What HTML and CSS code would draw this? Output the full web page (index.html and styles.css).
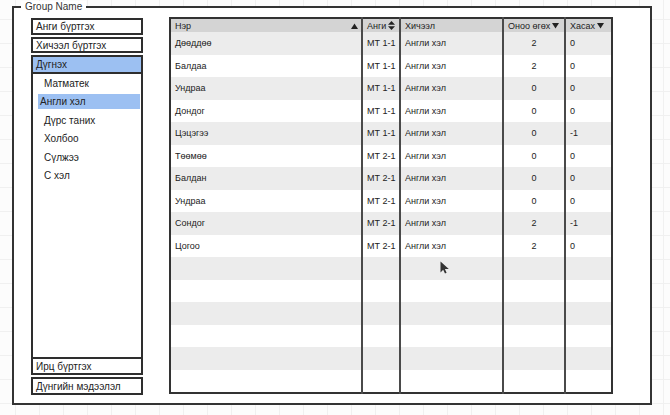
FILE: index.html
```html
<!DOCTYPE html>
<html lang="mn">
<head>
<meta charset="utf-8">
<title>Дүгнэх</title>
<link rel="stylesheet" href="styles.css">
</head>
<body>
<div class="page">
  <div class="group">
    <div class="legend">Group Name</div>
    <div class="side">
      <div class="btn btn-1">Анги бүртгэх</div>
      <div class="btn btn-2">Хичээл бүртгэх</div>
      <div class="btn btn-3 active">Дүгнэх</div>
      <ul class="tree">
        <li class="item">Матматек</li>
        <li class="item selected">Англи хэл</li>
        <li class="item">Дүрс таних</li>
        <li class="item">Холбоо</li>
        <li class="item">Сүлжээ</li>
        <li class="item">С хэл</li>
      </ul>
      <div class="btn btn-4">Ирц бүртгэх</div>
      <div class="btn btn-5">Дүнгийн мэдээлэл</div>
    </div>
    <table class="grid">
      <colgroup>
        <col class="c-name"><col class="c-class"><col class="c-subj"><col class="c-score"><col class="c-minus">
      </colgroup>
      <thead>
        <tr>
          <th><div class="hd hd-spread"><span>Нэр</span><svg class="ico" width="7" height="6" viewBox="0 0 7 6"><polygon points="0,6 3.5,0.5 7,6" fill="#222"/></svg></div></th>
          <th><div class="hd"><span>Анги</span><svg class="ico" width="7" height="9" viewBox="0 0 7 9"><polygon points="0,3.8 3.5,0 7,3.8" fill="#222"/><polygon points="0,5.2 3.5,9 7,5.2" fill="#222"/></svg></div></th>
          <th><div class="hd"><span>Хичээл</span></div></th>
          <th><div class="hd"><span>Оноо өгөх</span><svg class="ico" width="7" height="6" viewBox="0 0 7 6"><polygon points="0,0 7,0 3.5,5.5" fill="#222"/></svg></div></th>
          <th class="last"><div class="hd"><span>Хасах</span><svg class="ico" width="7" height="6" viewBox="0 0 7 6"><polygon points="0,0 7,0 3.5,5.5" fill="#222"/></svg></div></th>
        </tr>
      </thead>
      <tbody>
        <tr><td>Дөөддөө</td><td>МТ 1-1</td><td>Англи хэл</td><td class="num">2</td><td class="last">0</td></tr>
        <tr><td>Балдаа</td><td>МТ 1-1</td><td>Англи хэл</td><td class="num">2</td><td class="last">0</td></tr>
        <tr><td>Ундраа</td><td>МТ 1-1</td><td>Англи хэл</td><td class="num">0</td><td class="last">0</td></tr>
        <tr><td>Дондог</td><td>МТ 1-1</td><td>Англи хэл</td><td class="num">0</td><td class="last">0</td></tr>
        <tr><td>Цэцэгээ</td><td>МТ 1-1</td><td>Англи хэл</td><td class="num">0</td><td class="last">-1</td></tr>
        <tr><td>Төөмөө</td><td>МТ 2-1</td><td>Англи хэл</td><td class="num">0</td><td class="last">0</td></tr>
        <tr><td>Балдан</td><td>МТ 2-1</td><td>Англи хэл</td><td class="num">0</td><td class="last">0</td></tr>
        <tr><td>Ундраа</td><td>МТ 2-1</td><td>Англи хэл</td><td class="num">0</td><td class="last">0</td></tr>
        <tr><td>Сондог</td><td>МТ 2-1</td><td>Англи хэл</td><td class="num">2</td><td class="last">-1</td></tr>
        <tr><td>Цогоо</td><td>МТ 2-1</td><td>Англи хэл</td><td class="num">2</td><td class="last">0</td></tr>
        <tr><td></td><td></td><td></td><td></td><td class="last"></td></tr>
        <tr><td></td><td></td><td></td><td></td><td class="last"></td></tr>
        <tr><td></td><td></td><td></td><td></td><td class="last"></td></tr>
        <tr><td></td><td></td><td></td><td></td><td class="last"></td></tr>
        <tr><td></td><td></td><td></td><td></td><td class="last"></td></tr>
        <tr><td></td><td></td><td></td><td></td><td class="last"></td></tr>
      </tbody>
    </table>
  </div>
  <svg class="cursor" width="10" height="13" viewBox="0 0 10 13"><path d="M0.5 0.5 L0.5 11.5 L3.2 8.8 L5 12.5 L6.6 11.8 L4.9 8.1 L8.8 8.1 Z" fill="#333"/></svg>
</div>
</body>
</html>
```
FILE: styles.css
```css
html, body {
  margin: 0;
  height: 100%;
}

body {
  font-family: "Liberation Sans", Arial, sans-serif;
  font-size: 10px;
  color: #222;
  background-color: #fcfcfc;
  background-image:
    linear-gradient(to right, #f0f0f0 1px, transparent 1px),
    linear-gradient(to bottom, #f0f0f0 1px, transparent 1px);
  background-size: 24px 24px;
  background-position: 15px 19px;
}

.page {
  position: relative;
  height: 415px;
  box-sizing: border-box;
  padding: 6px 18px 0 12px;
}

.group {
  position: relative;
  height: 399px;
  box-sizing: border-box;
  border: 2px solid #333;
  background: #fff;
  display: flex;
  align-items: flex-start;
  gap: 26px;
  padding: 9px 0 0 17px;
}

.legend {
  position: absolute;
  top: -7px;
  left: 7px;
  padding: 0 4px;
  background: #fff;
  line-height: 12px;
  color: #333;
}

/* sidebar */
.side {
  width: 112px;
  height: 377px;
  margin-top: 1px;
  display: flex;
  flex-direction: column;
  flex: none;
}

.btn {
  box-sizing: border-box;
  border: 2px solid #2e2e2e;
  background: #fff;
  padding-left: 3px;
  display: flex;
  align-items: center;
  white-space: nowrap;
}

.btn-1 { height: 17px; margin-bottom: 2px; }
.btn-2 { height: 16px; margin-bottom: 2px; }
.btn-3 { height: 19px; }
.btn-4 { height: 18px; margin-bottom: 2px; }
.btn-5 { height: 18px; }

.active {
  background: #9cc0f2;
}

.tree {
  flex: 1;
  margin: 0;
  list-style: none;
  border-left: 2px solid #2e2e2e;
  border-right: 2px solid #2e2e2e;
  padding: 1.5px 1px 0 5px;
}

.item {
  height: 15px;
  line-height: 15px;
  margin-bottom: 3.5px;
  padding-left: 6px;
}

.item.selected {
  background: #9cc0f2;
  padding-left: 2px;
}

/* data grid */
.grid {
  width: 442px;
  flex: none;
  table-layout: fixed;
  border-collapse: collapse;
  border: 2px solid #333;
  font-size: 9px;
}

.c-name { width: 192px; }
.c-class { width: 38px; }
.c-subj { width: 103px; }
.c-score { width: 62px; }
.c-minus { width: 47px; }

.grid th {
  height: 13px;
  padding: 0 3px 0 4px;
  background: #d4d4d4;
  font-weight: normal;
  text-align: left;
  border-right: 2px solid #4a4a4a;
  white-space: nowrap;
}

.hd {
  display: flex;
  align-items: center;
  gap: 2px;
  height: 13px;
}

.hd-spread {
  justify-content: space-between;
}

.ico {
  display: block;
  flex: none;
}

.grid td {
  height: 22.5px;
  padding: 0 4px;
  border-right: 2px solid #4a4a4a;
  white-space: nowrap;
  overflow: hidden;
}

.grid tbody tr:nth-child(odd) td {
  background: #ececec;
}

.grid .num {
  text-align: center;
}

.grid .last {
  border-right: none;
}

.cursor {
  position: absolute;
  left: 440px;
  top: 261px;
}
```
